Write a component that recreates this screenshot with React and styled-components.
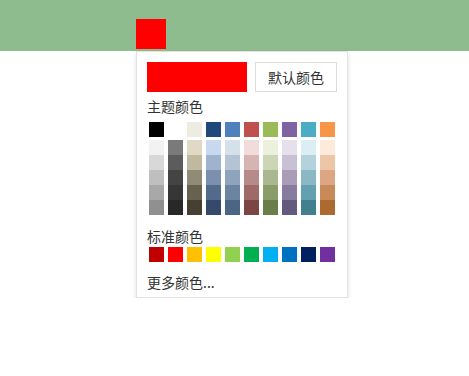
import React from 'react';
import styled, { createGlobalStyle } from 'styled-components';

const themeTop = ['#000000', '#ffffff', '#eeece1', '#1f497d', '#4f81bd', '#c0504d', '#9bbb59', '#8064a2', '#4bacc6', '#f79646'];

// 每一列从浅到深 5 格
const themeShades = [
  ['#f2f2f2', '#d8d8d8', '#bfbfbf', '#a8a8a8', '#909090'],
  ['#7a7a7a', '#5c5c5c', '#444444', '#363636', '#282828'],
  ['#e0d9c6', '#c0b9a0', '#8f8b77', '#67624f', '#454032'],
  ['#c8d8ee', '#a0b3cd', '#7a90ae', '#536b8b', '#35496b'],
  ['#d6e0ea', '#b4c4d5', '#8ea4bc', '#6b84a0', '#4a6684'],
  ['#f2dcdb', '#d6b4b2', '#b68a88', '#9e6a68', '#7c4442'],
  ['#ebf1dd', '#ccd6b6', '#a9b890', '#8a9c6a', '#6a7e4a'],
  ['#e5e0ec', '#c8c0d4', '#a89cb8', '#877ca0', '#645a7e'],
  ['#dbeef3', '#b4d2dc', '#8cb8c6', '#65a0b0', '#43808e'],
  ['#fdeada', '#ecc6a6', '#dca682', '#c88a58', '#ac6a30'],
];

const standard = ['#c00000', '#ff0000', '#ffc000', '#ffff00', '#92d050', '#00b050', '#00b0f0', '#0070c0', '#002060', '#7030a0'];

const GlobalStyle = createGlobalStyle`
  body {
    margin: 0;
    background: #fff;
    font-family: 'Noto Sans CJK SC', 'Noto Sans', sans-serif;
  }
`;

export default function App() {
  const current = '#f00';

  return (
    <>
      <GlobalStyle />
      <TopBar>
        <Trigger color={current} />
      </TopBar>
      <Holder>
        <Panel>
          <PreviewRow>
            <Preview color={current} />
            <DefaultButton>默认颜色</DefaultButton>
          </PreviewRow>

          <Title top={4} bottom={6}>主题颜色</Title>
          <SwatchRow>
            {themeTop.map((c) => (
              <Swatch key={c} color={c} />
            ))}
          </SwatchRow>
          <ShadeGrid>
            {themeShades.map((col, i) => (
              <ShadeColumn key={i}>
                {col.map((c) => (
                  <ShadeCell key={c} color={c} />
                ))}
              </ShadeColumn>
            ))}
          </ShadeGrid>

          <Title top={11} bottom={1}>标准颜色</Title>
          <SwatchRow>
            {standard.map((c) => (
              <Swatch key={c} color={c} />
            ))}
          </SwatchRow>

          <MoreLink>更多颜色...</MoreLink>
        </Panel>
      </Holder>
    </>
  );
}

// --- Styled Components ---

const TopBar = styled.div`
  display: flex;
  align-items: flex-end;
  height: 51px;
  padding: 0 0 2px 136px;
  box-sizing: border-box;
  background: #8fbc8f;
`;

const Trigger = styled.div`
  width: 30px;
  height: 30px;
  background: ${(props) => props.color};
`;

const Holder = styled.div`
  padding-left: 136px;
`;

const Panel = styled.div`
  display: flex;
  flex-direction: column;
  width: 212px;
  box-sizing: border-box;
  padding: 10px 10px 5px;
  background: #fff;
  border: 1px solid #e2e2e2;
  box-shadow: 0 2px 5px rgba(0, 0, 0, 0.12);
  color: #333;
  font-size: 14px;
`;

const PreviewRow = styled.div`
  display: flex;
  gap: 8px;
  height: 30px;
`;

const Preview = styled.div`
  width: 100px;
  background: ${(props) => props.color};
`;

const DefaultButton = styled.button`
  flex: 1;
  padding: 0;
  border: 1px solid #dcdcdc;
  background: #fff;
  color: #333;
  font-family: inherit;
  font-size: 14px;
`;

const Title = styled.div`
  line-height: 20px;
  margin: ${(props) => props.top}px 0 ${(props) => props.bottom}px;
`;

const SwatchRow = styled.div`
  display: flex;
  justify-content: center;
  gap: 4px;
`;

const Swatch = styled.div`
  width: 15px;
  height: 15px;
  background: ${(props) => props.color};
`;

const ShadeGrid = styled.div`
  display: flex;
  justify-content: center;
  gap: 4px;
  margin-top: 3px;
`;

const ShadeColumn = styled.div`
  display: flex;
  flex-direction: column;
`;

const ShadeCell = styled.div`
  width: 15px;
  height: 15px;
  background: ${(props) => props.color};
`;

const MoreLink = styled.div`
  line-height: 20px;
  margin-top: 10px;
  cursor: pointer;
`;
